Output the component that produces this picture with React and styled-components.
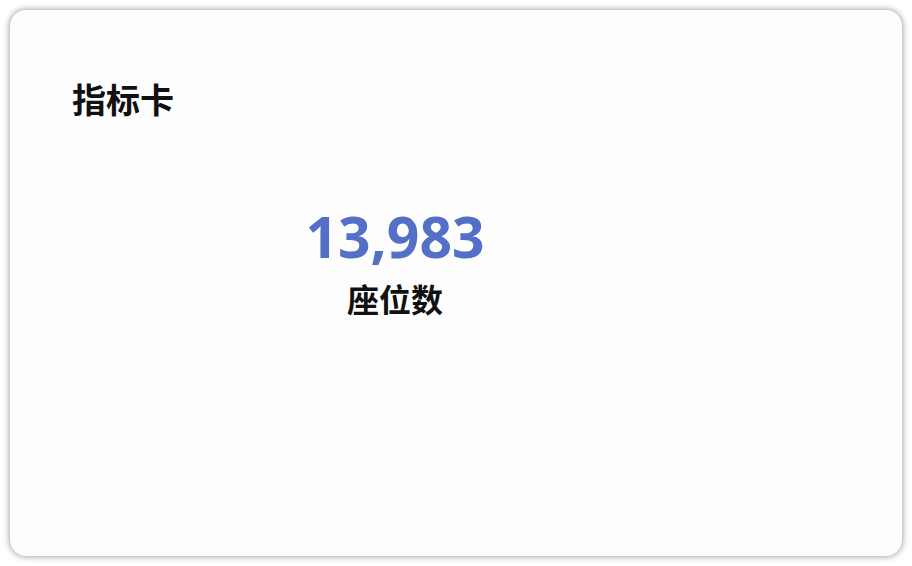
import React from 'react';
import styled, { createGlobalStyle } from 'styled-components';

const GlobalStyle = createGlobalStyle`
  html, body {
    margin: 0;
    padding: 0;
    background: #ffffff;
  }
  body {
    font-family: "Open Sans", "Noto Sans CJK SC", sans-serif;
  }
`;

const Page = styled.div`
  width: 912px;
  height: 566px;
  padding: 10px;
  box-sizing: border-box;
`;

const Card = styled.div`
  height: 100%;
  box-sizing: border-box;
  background: #fdfdfd;
  border-radius: 16px;
  box-shadow: 0 0 7px rgba(0, 0, 0, 0.45);
  padding: 65px 62px;
  display: flex;
  flex-direction: column;
`;

const Title = styled.h2`
  margin: 0;
  font-family: "Noto Sans CJK SC", sans-serif;
  font-size: 34px;
  line-height: 48px;
  font-weight: 700;
  color: #111;
`;

const MetricRow = styled.div`
  display: flex;
  margin-top: 77px;
`;

const Metric = styled.div`
  width: 646px;
  display: flex;
  flex-direction: column;
  align-items: center;
`;

const Value = styled.div`
  font-family: "Open Sans", sans-serif;
  font-size: 57px;
  font-weight: 700;
  line-height: 72px;
  color: ${({ $color }) => $color};
`;

const Label = styled.div`
  margin-top: 4px;
  font-family: "Noto Sans CJK SC", sans-serif;
  font-size: 32px;
  font-weight: 700;
  line-height: 44px;
  color: #111;
`;

const App = () => (
  <Page>
    <GlobalStyle />
    <Card>
      <Title>指标卡</Title>
      <MetricRow>
        <Metric>
          <Value $color="#5470c6">13,983</Value>
          <Label>座位数</Label>
        </Metric>
      </MetricRow>
    </Card>
  </Page>
);

export default App;
